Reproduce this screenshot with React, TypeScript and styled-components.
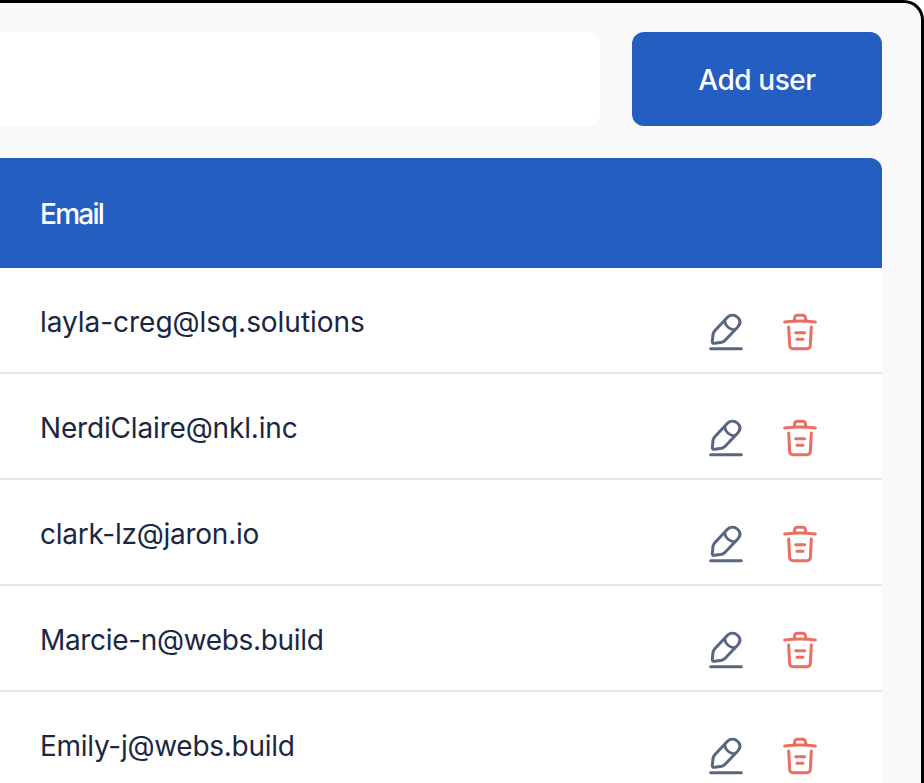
import React from "react";
import styled, { createGlobalStyle } from "styled-components";

const GlobalStyle = createGlobalStyle`
  * { box-sizing: border-box; }
  html, body { margin: 0; background: #fff; overflow: hidden; }
`;

const Frame = styled.main`
  width: 924px;
  height: 783px;
  overflow: hidden;
  padding: 29px 39px 0 0;
  border-top: 3px solid #000;
  border-right: 3px solid #000;
  border-top-right-radius: 20px;
  background: #f9f9fb;
  color: #1b2741;
  font-family: Inter, "Open Sans", sans-serif;
  font-size: 28px;
`;

const Toolbar = styled.div`
  display: flex;
  gap: 32px;
  height: 94px;
  margin-bottom: 32px;
`;

const SearchField = styled.div`
  flex: 1;
  border-radius: 0 12px 12px 0;
  background: #fff;
`;

const AddButton = styled.button`
  width: 250px;
  border: 0;
  padding: 2px 0 0;
  border-radius: 12px;
  background: #245ec1;
  color: #fff;
  font: 500 28px/38px Inter, "Open Sans", sans-serif;
`;

const Label = styled.span<{ $spacing: number }>`
  letter-spacing: ${(p) => p.$spacing}px;
  white-space: nowrap;
`;

const Table = styled.section`
  background: #fff;
  border-top-right-radius: 12px;
`;

const HeaderRow = styled.header`
  height: 110px;
  padding: 37px 40px 0;
  border-top-right-radius: 12px;
  background: #245ec1;
  color: #fff;
  font-weight: 500;
  line-height: 38px;
`;

const Row = styled.div`
  display: flex;
  justify-content: space-between;
  height: 106px;
  padding: 35px 57px 0 40px;
  border-bottom: 2px solid #e6e6e6;
  line-height: 38px;
`;

const Actions = styled.div`
  display: flex;
  gap: 25px;
  margin-top: 2px;
`;

const Icon = styled.svg`
  display: block;
  width: 50px;
  height: 50px;
  fill: none;
  stroke-width: 9;
  stroke-linecap: round;
  stroke-linejoin: round;
`;

const PencilIcon = () => (
  <Icon viewBox="30 15 150 150" stroke="#5a6680">
    <path d="M62 146H154" />
    <path d="M67 124L69 103Q70 98 73 94L111 53C120 44 133 43 142 51C151 59 152 70 144 80L104 122Q100 126 95 127L74 130Q66 131 67 124Z" />
    <path d="M104 63C106 77 118 88 134 90" />
  </Icon>
);

const TrashIcon = () => (
  <Icon viewBox="255 15 150 150" stroke="#ea6f62">
    <path d="M284 66Q330 60 376 66" />
    <path d="M313 62L314 53Q315 46 322 46H339Q345 46 346 53L348 62" />
    <path d="M296 81L299 137Q300 146 309 146H351Q360 146 361 137L364 81" />
    <path d="M317 98H344M321 118H339" />
  </Icon>
);

const users = [
  { email: "layla-creg@lsq.solutions", spacing: -0.04 },
  { email: "NerdiClaire@nkl.inc", spacing: -0.17 },
  { email: "clark-lz@jaron.io", spacing: -0.25 },
  { email: "Marcie-n@webs.build", spacing: -0.33 },
  { email: "Emily-j@webs.build", spacing: -0.27 },
];

export default function App() {
  return (
    <>
      <GlobalStyle />
      <Frame>
        <Toolbar>
          <SearchField />
          <AddButton><Label $spacing={-0.42}>Add user</Label></AddButton>
        </Toolbar>
        <Table>
          <HeaderRow><Label $spacing={-1.75}>Email</Label></HeaderRow>
          {users.map((user) => (
            <Row key={user.email}>
              <Label $spacing={user.spacing}>{user.email}</Label>
              <Actions>
                <PencilIcon />
                <TrashIcon />
              </Actions>
            </Row>
          ))}
        </Table>
      </Frame>
    </>
  );
}
